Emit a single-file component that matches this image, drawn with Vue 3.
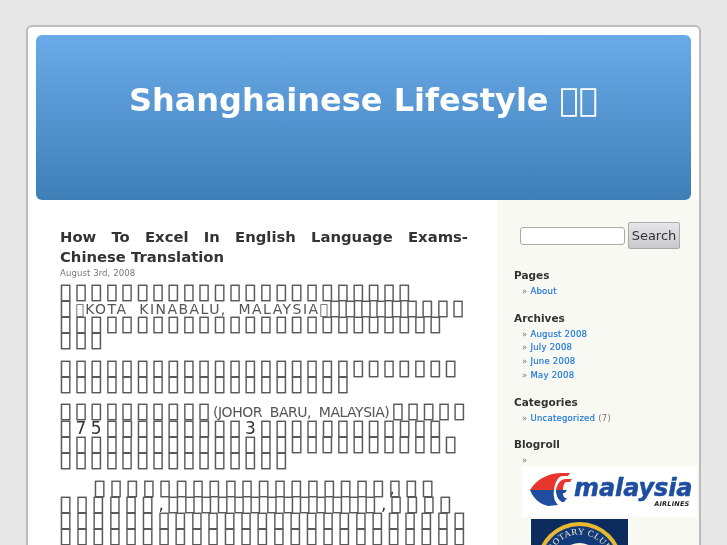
<script setup>
const box = (n) => '\uE000'.repeat(n)

const links = {
  pages: ['About'],
  archives: ['August 2008', 'July 2008', 'June 2008', 'May 2008'],
}
</script>

<template>
  <div class="page">
    <header class="header">
      <h1>Shanghainese Lifestyle <span class="tofu">{{ box(2) }}</span></h1>
    </header>
    <div class="columns">
      <main class="content">
        <h2>How To Excel In English Language Exams-Chinese Translation</h2>
        <small class="date">August 3rd, 2008</small>
        <div class="entry">
          <p>
            <span class="ln">{{ box(23) }}</span>
            <span class="ln">{{ box(1) }}<span class="sm kota">{{ box(1) }}KOTA&nbsp; KINABALU,&nbsp; MALAYSIA{{ box(1) }}</span>{{ box(9) }}</span>
            <span class="ln">{{ box(25) }}</span>
            <span class="ln">{{ box(3) }}</span>
          </p>
          <p>
            <span class="ln">{{ box(26) }}</span>
            <span class="ln">{{ box(19) }}</span>
          </p>
          <p>
            <span class="ln tall">{{ box(10) }}<span class="sm johor">(JOHOR&nbsp; BARU,&nbsp; MALAYSIA)</span>{{ box(5) }}</span>
            <span class="ln">{{ box(1) }}<span class="num">75</span>{{ box(9) }}<span class="num">3</span>{{ box(12) }}</span>
            <span class="ln">{{ box(26) }}</span>
            <span class="ln">{{ box(15) }}</span>
          </p>
          <p class="wide">
            <span class="ln first">{{ box(18) }}<span class="comma flat">,</span>{{ box(3) }}</span>
            <span class="ln">{{ box(6) }}<span class="comma">,</span>{{ box(13) }}<span class="comma">,</span>{{ box(4) }}</span>
            <span class="ln">{{ box(25) }}</span>
            <span class="ln">{{ box(25) }}</span>
          </p>
        </div>
      </main>
      <aside class="sidebar">
        <form class="search" @submit.prevent>
          <input type="text" />
          <button>Search</button>
        </form>
        <h3>Pages</h3>
        <ul><li v-for="l in links.pages" :key="l"><a>{{ l }}</a></li></ul>
        <h3>Archives</h3>
        <ul><li v-for="l in links.archives" :key="l"><a>{{ l }}</a></li></ul>
        <h3>Categories</h3>
        <ul><li><a>Uncategorized</a> (7)</li></ul>
        <h3>Blogroll</h3>
        <ul><li></li></ul>
        <div class="airline">
          <svg width="44" height="36" viewBox="0 0 44 36">
            <path d="M0 17 C5 9 14 1 30 0 H40 L38 3 H32 C28 4 25 9 24 17 Z" fill="#e8352e" />
            <path d="M26 17 C27 11 30 7 35 6 H42 L40 9 H36 C34 10 33 13 33 17 Z" fill="#e8352e" />
            <path d="M0 17 H24 C23 23 24 28 28 32 L18 33 C8 31 3 24 0 17 Z" fill="#1f4da0" />
            <path d="M26 17 H37 L35 20 H33 C33 23 34 25 36 25 H37 L34 29 H32 C28 27 26 22 26 17 Z" fill="#1f4da0" />
          </svg>
          <span class="wordmark">malaysia<small>AIRLINES</small></span>
        </div>
        <div class="rotary">
          <svg width="97" height="27" viewBox="0 0 97 27">
            <defs>
              <path id="rotary-arc" d="M18 46 A30.500 30.500 0 0 1 79 46" />
            </defs>
            <circle cx="48.500" cy="46" r="43" fill="#e9b92f" />
            <circle cx="48.500" cy="46" r="39" fill="#123a78" />
            <circle cx="48.500" cy="46" r="22" fill="#fbf6e2" />
            <text class="rotary-text"><textPath href="#rotary-arc" startOffset="50%" text-anchor="middle">ROTARY CLUB</textPath></text>
          </svg>
        </div>
      </aside>
    </div>
  </div>
</template>

<style scoped>
.page {
  box-sizing: border-box;
  width: 675px;
  margin: 25px 0 0 26px;
  background: #fff;
  border: 1px solid #bbb;
  border-width: 2px 2px 0;
  border-radius: 6px 6px 0 0;
  padding-top: 8px;
  will-change: transform;
}
.header {
  height: 165px;
  margin: 0 8px;
  border-radius: 6px;
  background: linear-gradient(#69aae8, #3f7fb8);
  box-sizing: border-box;
  padding-top: 44px;
}
h1 {
  margin: 0;
  color: #fff;
  font-size: 32px;
  font-weight: bold;
  line-height: 42px;
  text-align: center;
}
.tofu {
  font-weight: normal;
}
.columns {
  display: flex;
}
.content {
  box-sizing: border-box;
  width: 469px;
  padding: 27px 29px 0 32px;
}
h2 {
  margin: 0;
  font-size: 14.800px;
  line-height: 20px;
  color: #333;
  text-align: justify;
}
.date {
  display: block;
  font-size: 8.500px;
  line-height: 12px;
  letter-spacing: 0.1px;
  color: #777;
}
.entry {
  margin-top: 4px;
  font-size: 19px;
  line-height: 16px;
  letter-spacing: 4px;
  color: #555;
  -webkit-text-stroke: 0.4px #666;
}
.entry p {
  margin: 0 0 11.500px;
}
.ln {
  display: block;
  height: 16px;
  white-space: nowrap;
}
.tall {
  height: 17px;
}
.first {
  padding-left: 34px;
}
.wide {
  letter-spacing: 5px;
}
.sm {
  font-size: 14px;
  color: #555;
  -webkit-text-stroke: 0;
}
.kota {
  letter-spacing: 1.450px;
}
.johor {
  letter-spacing: -0.500px;
  margin: 0 3px 0 -1px;
}
.num {
  font-size: 17px;
  letter-spacing: 4.600px;
  color: #333;
  -webkit-text-stroke: 0;
}
.comma {
  font-size: 17px;
  letter-spacing: 0;
  margin: 0 4px 0 0;
  color: #333;
  -webkit-text-stroke: 0;
}
.comma.flat {
  margin: 0 -5.400px 0 0;
}
.sidebar {
  width: 203px;
  box-sizing: border-box;
  background: #f9f9f4;
  padding: 22px 0 0 17px;
  height: 400px;
}
.search {
  display: flex;
  align-items: center;
  margin: 0 0 19px 6px;
  gap: 3px;
}
.search input {
  box-sizing: border-box;
  width: 105px;
  height: 18px;
  border: 1px solid #aaa;
  border-radius: 3px;
  background: #fff;
  padding: 0;
}
.search button {
  box-sizing: border-box;
  width: 52px;
  height: 27px;
  border: 1px solid #aaa;
  border-radius: 2px;
  background: linear-gradient(#e6e6ea, #c9c9ce);
  color: #333;
  font: 13px "DejaVu Sans", sans-serif;
  padding: 0;
}
h3 {
  margin: 12px 0 0;
  font-size: 10.500px;
  line-height: 14px;
  color: #333;
}
ul {
  list-style: none;
  margin: 3px 0 0;
  padding: 0 0 0 8px;
  font-size: 8.500px;
  line-height: 13.700px;
  letter-spacing: 0.25px;
  color: #777;
}
li::before {
  content: "» ";
}
a {
  color: #1f78dc;
  -webkit-text-stroke: 0.2px #1f78dc;
}
.airline {
  display: flex;
  align-items: flex-start;
  width: 175px;
  height: 51px;
  background: #fff;
  margin: -2px 0 0 8px;
  padding: 7px 0 0 8px;
  box-sizing: border-box;
}
.airline svg {
  flex: none;
}
.wordmark {
  position: relative;
  flex: none;
  font: italic bold 24px "DejaVu Sans", sans-serif;
  line-height: 30px;
  color: #1f4da0;
  letter-spacing: -0.1px;
  -webkit-text-stroke: 0.5px #1f4da0;
}
.wordmark small {
  position: absolute;
  right: 3px;
  bottom: -5px;
  font-size: 6.500px;
  line-height: 8px;
  letter-spacing: 0.2px;
  color: #222;
  -webkit-text-stroke: 0;
}
.rotary {
  width: 97px;
  height: 30px;
  margin: 2px 0 0 17px;
  background: #0c2c5e;
  overflow: hidden;
}
.rotary svg {
  display: block;
}
.rotary-text {
  font: 9px "Liberation Serif", serif;
  fill: #f3ead0;
  letter-spacing: 0.5px;
}
</style>

<style>
html, body {
  margin: 0;
  height: 545px;
  overflow: hidden;
  background: #e7e7e7;
  font-family: "DejaVu Sans", sans-serif;
}
</style>
